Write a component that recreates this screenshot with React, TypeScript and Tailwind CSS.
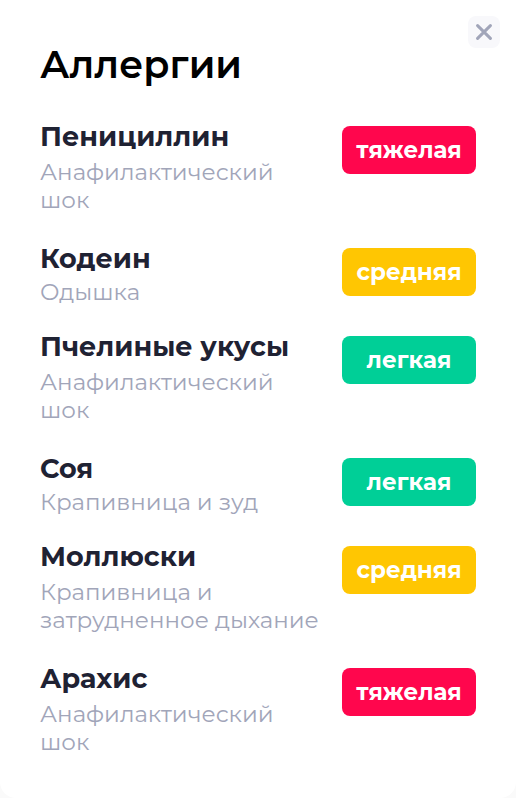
import { useState } from "react";

type Severity = "severe" | "moderate" | "mild";

interface Allergy {
    name: string;
    reaction: string;
    severity: Severity;
    wrap?: boolean;
}

const allergies: Allergy[] = [
    { name: "Пенициллин", reaction: "Анафилактический шок", severity: "severe", wrap: true },
    { name: "Кодеин", reaction: "Одышка", severity: "moderate" },
    { name: "Пчелиные укусы", reaction: "Анафилактический шок", severity: "mild", wrap: true },
    { name: "Соя", reaction: "Крапивница и зуд", severity: "mild" },
    { name: "Моллюски", reaction: "Крапивница и затрудненное дыхание", severity: "moderate", wrap: true },
    { name: "Арахис", reaction: "Анафилактический шок", severity: "severe", wrap: true },
];

const badges: Record<Severity, { label: string; color: string }> = {
    severe: { label: "тяжелая", color: "bg-[#ff064d]" },
    moderate: { label: "средняя", color: "bg-[#ffc602]" },
    mild: { label: "легкая", color: "bg-[#00cf97]" },
};

function AllergyRow({ allergy }: { allergy: Allergy }) {
    const badge = badges[allergy.severity];

    return (
        <li className="flex items-start justify-between">
            <div className="min-w-0 flex-1 pr-4">
                <h2 className="text-[27px] leading-[34px] font-bold text-[#1f2233]">
                    {allergy.name}
                </h2>
                <p
                    className={`text-[23px] leading-7 text-[#a1a5b9] ${
                        allergy.wrap ? "py-1" : "pt-0.5"
                    }`}
                >
                    {allergy.reaction}
                </p>
            </div>

            <span
                className={`mt-1.5 flex h-12 w-[134px] shrink-0 items-center justify-center rounded-lg text-[23px] font-bold text-white ${badge.color}`}
            >
                {badge.label}
            </span>
        </li>
    );
}

function App() {
    const [open, setOpen] = useState(true);

    return (
        <main className="min-h-screen bg-[#fafafa] font-['Montserrat','Inter',sans-serif]">
            {open && (
                <section className="relative min-h-screen rounded-b-2xl bg-white px-10 pt-10 pb-8">
                    <button
                        type="button"
                        aria-label="Закрыть"
                        onClick={() => setOpen(false)}
                        className="absolute top-4 right-4 flex size-8 items-center justify-center rounded-lg bg-[#f8f8fb]"
                    >
                        <svg viewBox="0 0 16 16" className="size-4" fill="none">
                            <path
                                d="M1.6 1.6 14.4 14.4M14.4 1.6 1.6 14.4"
                                stroke="#a1a5b9"
                                strokeWidth="3"
                                strokeLinecap="round"
                            />
                        </svg>
                    </button>

                    <h1 className="text-[38px] leading-[50px] font-semibold text-black">
                        Аллергии
                    </h1>

                    <ul className="mt-[30px] flex flex-col gap-6">
                        {allergies.map((allergy) => (
                            <AllergyRow key={allergy.name} allergy={allergy} />
                        ))}
                    </ul>
                </section>
            )}
        </main>
    );
}

export default App;
